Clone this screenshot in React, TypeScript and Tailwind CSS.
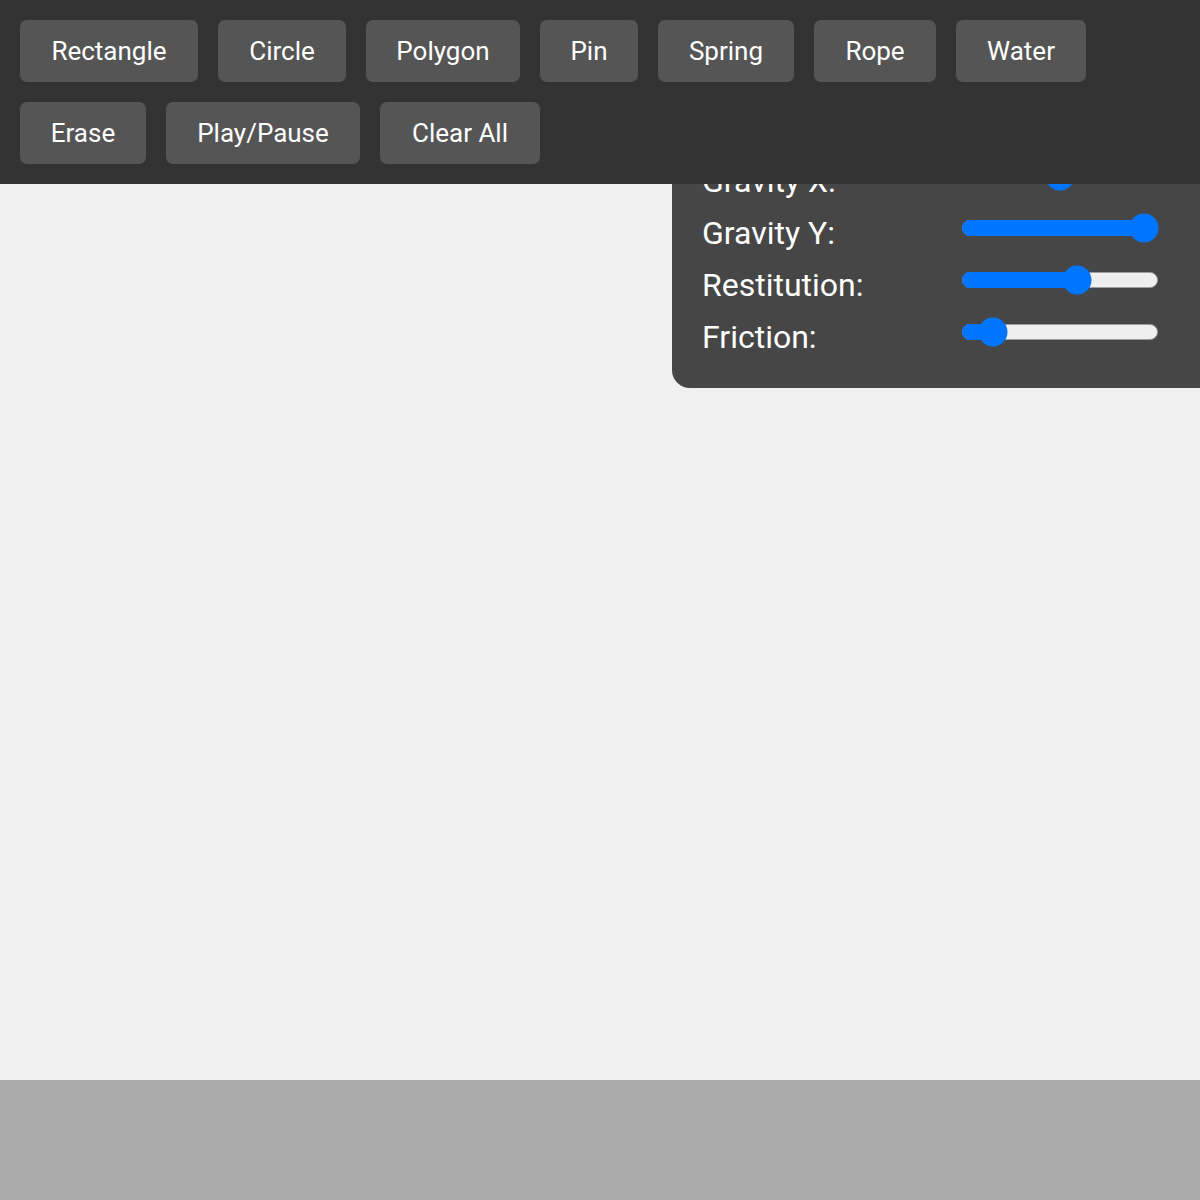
import React from "react";

const row1 = [
  { label: "Rectangle", w: "w-[178px]" },
  { label: "Circle", w: "w-[128px]" },
  { label: "Polygon", w: "w-[154px]" },
  { label: "Pin", w: "w-[98px]" },
  { label: "Spring", w: "w-[136px]" },
  { label: "Rope", w: "w-[122px]" },
  { label: "Water", w: "w-[130px]" },
];
const row2 = [
  { label: "Erase", w: "w-[126px]" },
  { label: "Play/Pause", w: "w-[194px]" },
  { label: "Clear All", w: "w-[160px]" },
];

const sliders = [
  { label: "Gravity X:", value: 0.5 },
  { label: "Gravity Y:", value: 1 },
  { label: "Restitution:", value: 0.6 },
  { label: "Friction:", value: 0.1 },
];

function Btn({ label, w }: { label: string; w: string }) {
  return (
    <button
      className={`${w} h-[62px] shrink-0 rounded-[7px] bg-[#555555] text-[26px] leading-[30px] text-white flex items-center justify-center`}
    >
      {label}
    </button>
  );
}

function Slider({ value }: { value: number }) {
  const W = 196;
  const T = 29;
  const center = T / 2 + value * (W - T);
  return (
    <div className="relative w-[196px] h-[16px] mb-[10px] shrink-0">
      <div className="absolute inset-0 rounded-full bg-[#efefef] border-[1.5px] border-[#9e9e9e]" />
      <div
        className="absolute left-0 top-0 h-[16px] rounded-full bg-[#0075ff]"
        style={{ width: center + 2 }}
      />
      <div
        className="absolute top-1/2 w-[29px] h-[29px] -translate-x-1/2 -translate-y-1/2 rounded-full bg-[#0075ff]"
        style={{ left: center }}
      />
    </div>
  );
}

export default function App() {
  return (
    <div
      className="relative w-[1200px] h-[1200px] flex flex-col overflow-hidden bg-[#f0f0f0]"
      style={{ fontFamily: "Roboto, 'Noto Sans', sans-serif" }}
    >
      <div className="relative z-10 h-[184px] shrink-0 bg-[#333333] p-[20px] flex flex-col gap-[20px]">
        <div className="flex gap-[20px]">
          {row1.map((b) => (
            <Btn key={b.label} {...b} />
          ))}
        </div>
        <div className="flex gap-[20px]">
          {row2.map((b) => (
            <Btn key={b.label} {...b} />
          ))}
        </div>
      </div>

      <div className="flex-1 bg-[#f0f0f0]" />
      <div className="h-[120px] shrink-0 bg-[#aaaaaa]" />

      <div className="absolute z-0 right-0 top-[125px] w-[528px] bg-[#464646] rounded-bl-[18px] pt-[30px] pb-[25px] pl-[30px] flex flex-col">
        {sliders.map((s) => (
          <div key={s.label} className="h-[52px] flex items-center">
            <span className="w-[260px] shrink-0 text-[32px] leading-[38px] text-white">
              {s.label}
            </span>
            <Slider value={s.value} />
          </div>
        ))}
      </div>
    </div>
  );
}
